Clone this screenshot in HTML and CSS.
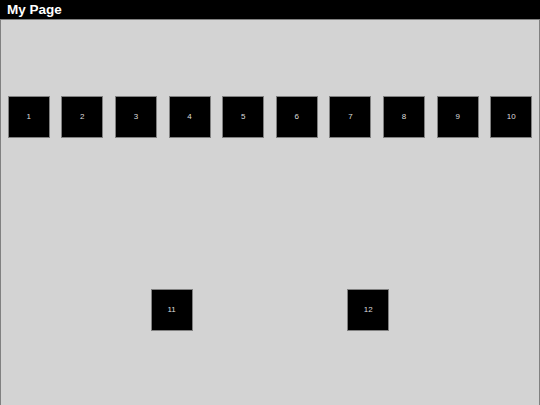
FILE: index.html
```html
<!DOCTYPE html>
<html lang="en">
<head>
    <meta charset="UTF-8">
    <meta name="viewport" content="width=device-width, initial-scale=1.0">
    <title>My Page</title>
    <link rel="stylesheet" href="styles.css">
</head>
<body>

<div class="header">My Page</div>

<div class="container">
    <div class="box">1</div>
    <div class="box">2</div>
    <div class="box">3</div>
    <div class="box">4</div>
    <div class="box">5</div>
    <div class="box">6</div>
    <div class="box">7</div>
    <div class="box">8</div>
    <div class="box">9</div>
    <div class="box">10</div>
    <div class="box">11</div>
    <div class="box">12</div>
</div>

</body>
</html>
```

FILE: styles.css
```css
html, body {
    margin: 0;
    padding: 0;
    overflow: hidden;
}

body {
    font-family: "Liberation Sans", Arial, sans-serif;
    background-color: #d3d3d3;
}

.header {
    height: 19px;
    line-height: 19px;
    padding-left: 7px;
    background-color: #000;
    color: #fff;
    font-size: 13.5px;
    font-weight: bold;
}

.container {
    height: 386px;
    border: 1px solid #808080;
    border-bottom: none;
    display: flex;
    flex-wrap: wrap;
    justify-content: space-evenly;
    align-content: space-around;
}

.box {
    width: 40px;
    height: 40px;
    margin: 5px;
    border: 1px solid #808080;
    background-color: #000;
    color: #ddd;
    font-size: 8px;
    display: flex;
    align-items: center;
    justify-content: center;
}
```
